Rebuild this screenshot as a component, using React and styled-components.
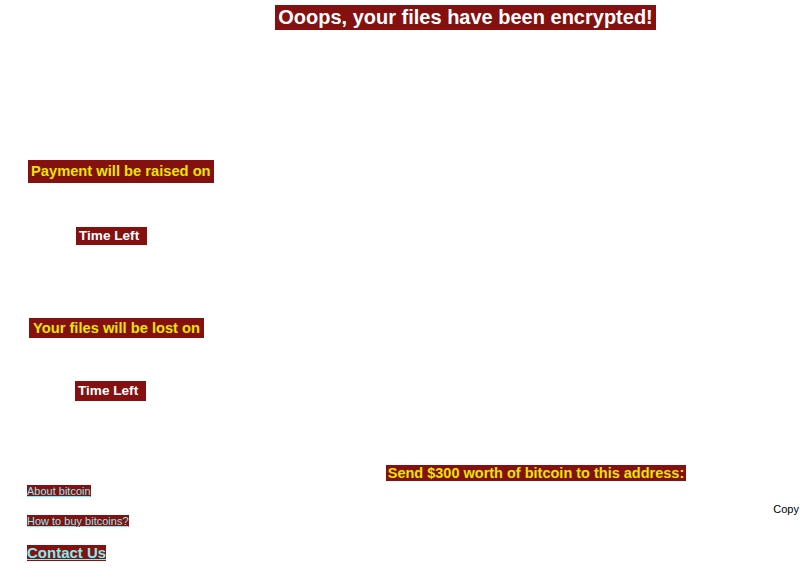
import React from "react";
import styled, { createGlobalStyle } from "styled-components";

const GlobalStyle = createGlobalStyle`
  html, body {
    margin: 0;
    padding: 0;
    background: #ffffff;
  }
  body {
    font-family: "Liberation Sans", Arial, sans-serif;
  }
`;

const maroon = "#841010";
const yellow = "#e6e600";
const cyan = "#80eef0";

const Page = styled.div`
  width: 810px;
  height: 585px;
  display: flex;
  flex-direction: column;
  overflow: hidden;
`;

const Header = styled.header`
  display: flex;
  justify-content: center;
  padding: 5px 0 0 121px;
`;

const Title = styled.h1`
  margin: 0;
  padding: 1px 3px;
  background: ${maroon};
  color: #ffffff;
  font-size: 20px;
  line-height: 23px;
  font-weight: bold;
`;

const Body = styled.div`
  display: grid;
  grid-template-columns: 240px 1fr;
`;

const Side = styled.aside`
  display: flex;
  flex-direction: column;
  align-items: flex-start;
  padding-top: 130px;
`;

const Label = styled.span`
  display: inline-block;
  background: ${maroon};
  color: ${(p) => (p.$white ? "#ffffff" : yellow)};
  font-weight: bold;
  font-size: ${(p) => p.$size || 14.7}px;
  line-height: ${(p) => p.$line || 23}px;
  padding: ${(p) => p.$pad || "0 3px"};
  margin-left: ${(p) => p.$left || 0}px;
  margin-top: ${(p) => p.$top || 0}px;
  white-space: pre;
`;

const Footer = styled.div`
  display: grid;
  grid-template-columns: 240px 1fr;
  margin-top: auto;
  padding-bottom: 24px;
`;

const Links = styled.nav`
  display: flex;
  flex-direction: column;
  align-items: flex-start;
  padding-left: 27px;
  padding-top: 20px;
`;

const Link = styled.a`
  display: inline-block;
  background: ${maroon};
  color: ${cyan};
  font-size: ${(p) => (p.$big ? 15 : 11)}px;
  font-weight: ${(p) => (p.$big ? "bold" : "normal")};
  line-height: ${(p) => (p.$big ? 16 : 12)}px;
  text-decoration: underline;
  text-decoration-color: ${cyan};
  margin-bottom: ${(p) => p.$gap || 0}px;
  cursor: pointer;
`;

const Address = styled.div`
  display: flex;
  flex-direction: column;
  align-items: center;
  padding-left: 22px;
`;

const CopyRow = styled.div`
  align-self: stretch;
  display: flex;
  justify-content: flex-end;
  margin-top: 22px;
`;

const CopyButton = styled.button`
  border: none;
  background: transparent;
  padding: 0 11px 0 0;
  color: #000000;
  font-family: "Liberation Sans", Arial, sans-serif;
  font-size: 11px;
  line-height: 13px;
`;

export default function App() {
  return (
    <Page>
      <GlobalStyle />
      <Header>
        <Title>Ooops, your files have been encrypted!</Title>
      </Header>
      <Body>
        <Side>
          <Label $left={28}>Payment will be raised on</Label>
          <Label $white $size={13.6} $line={18} $pad="0 8px 0 3px" $left={76} $top={44}>
            Time Left
          </Label>
          <Label $left={29} $top={73} $line={20} $pad="0 4px">
            Your files will be lost on
          </Label>
          <Label $white $size={13.6} $line={20} $pad="0 8px 0 3px" $left={75} $top={43}>
            Time Left
          </Label>
        </Side>
        <div />
      </Body>
      <Footer>
        <Links>
          <Link $gap={18}>About bitcoin</Link>
          <Link $gap={18}>How to buy bitcoins?</Link>
          <Link $big>Contact Us</Link>
        </Links>
        <Address>
          <Label $size={14.5} $line={16} $pad="0 2px">
            Send $300 worth of bitcoin to this address:
          </Label>
          <CopyRow>
            <CopyButton>Copy</CopyButton>
          </CopyRow>
        </Address>
      </Footer>
    </Page>
  );
}
